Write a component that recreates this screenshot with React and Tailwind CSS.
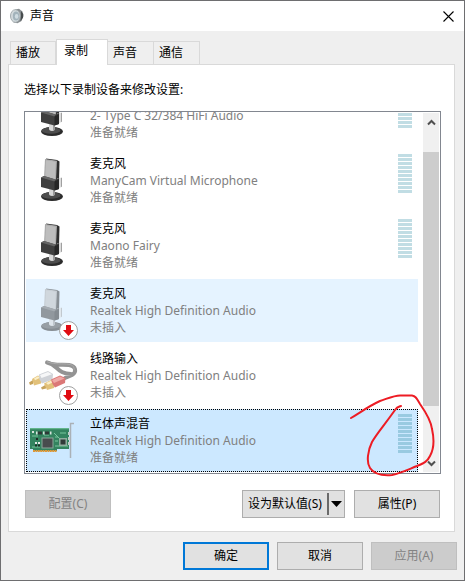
import { useState } from 'react';
import clsx from 'clsx';

const tabs = ['播放', '录制', '声音', '通信'];

const devices = [
  { id: 1, driver: '2- Type C 32/384 HiFi Audio', status: '准备就绪', icon: 'mic', meter: true },
  { id: 2, name: '麦克风', driver: 'ManyCam Virtual Microphone', status: '准备就绪', icon: 'mic', meter: true },
  { id: 3, name: '麦克风', driver: 'Maono Fairy', status: '准备就绪', icon: 'mic', meter: true },
  { id: 4, name: '麦克风', driver: 'Realtek High Definition Audio', status: '未插入', icon: 'mic', unplugged: true, hot: true },
  { id: 5, name: '线路输入', driver: 'Realtek High Definition Audio', status: '未插入', icon: 'line', unplugged: true },
  { id: 6, name: '立体声混音', driver: 'Realtek High Definition Audio', status: '准备就绪', icon: 'card', meter: true },
];

function SpeakerIcon() {
  return (
    <svg width="16" height="16" viewBox="0 0 16 16" aria-hidden="true">
      <path d="M6 1.500 10 .8l3.500 2.700L14.500 8l-2 5-4 2.200-4-.7z" fill="#8b9194" />
      <path d="M12 3 14.300 6l-.3 3.500-2.500 4z" fill="#474c4e" />
      <ellipse cx="6.300" cy="8" rx="4.800" ry="6.300" fill="#d3dadd" stroke="#a5adb0" />
      <ellipse cx="7" cy="8" rx="3.200" ry="4.500" fill="#a3b3bb" />
      <ellipse cx="7.600" cy="8.400" rx="1.800" ry="2.400" fill="#cfdbe1" />
    </svg>
  );
}

function MicShape() {
  return (
    <g>
      <ellipse cx="26" cy="47.500" rx="11" ry="4.500" fill="#2b2b2b" />
      <ellipse cx="25" cy="46.500" rx="9.500" ry="3.300" fill="#4d4d4d" />
      <path d="M23 39h6v6c0 2.500-6 2.500-6 0z" fill="#d8d8d8" />
      <path d="M27 39h2v7h-2z" fill="#9b9b9b" />
      <path d="M20 9.500 31 11l2.500 1.500-.5 19.500-4-1z" fill="#2e2e2e" />
      <path d="M19 10 31 11.800 30 31 18 29z" fill="#a9a9a9" />
      <path d="M20 11.200 29.800 12.700 29 30 19.200 28z" fill="#bdbdbd" />
      <path d="M31 29.500 36 28.500v9L32 40z" fill="#dcdcdc" />
      <path d="M35 29 36 28.800v8.700l-1 .7z" fill="#a0a0a0" />
      <path d="M15 28.500 18 27l11.500 3.500L33 29v11l-4.500 1.500L15 38z" fill="#3f3f3f" />
      <path d="M15 28.500 18 27l11.500 3.500-1 2z" fill="#666" />
      <path d="M28.500 32.500 33 30v10l-4.500 1.500z" fill="#262626" />
    </g>
  );
}

function LineInShape() {
  return (
    <g>
      <path
        d="M21 18.500C29 20 30 25 36 28c3 1.500 6 2 9 2M21 18.500C30 22 36 20 43 21 50 22 51 28 46 31L39 34"
        fill="none"
        stroke="#6f6f6f"
        strokeWidth="4"
        strokeLinecap="round"
      />
      <path d="M21 17.800C30 21 36 19.300 43 20.300c4 .6 5.500 3 5 6" fill="none" stroke="#929292" strokeWidth="1" />
      <path d="M3 38.500 7 36v4l-3 1z" fill="#b58526" />
      <path d="M6 35 12 31.500l4 3-1 5-7 2z" fill="#d9ad4e" />
      <path d="M8 34.500 12 32.300l2 1.500-5 2.500z" fill="#fae9b5" />
      <path d="M13 30.500 22 27l5 3-.5 5.500L16 39.500l-2.500-4z" fill="#bfc3ca" />
      <path d="M14 31 22 28l4 2.200L15.500 34z" fill="#f4f5f6" />
      <path d="M15 43.500 20 40.500v4l-4 1z" fill="#b58526" />
      <path d="M18 39.500 25 36l4 3-1 5-7 2z" fill="#d9ad4e" />
      <path d="M20 39 25 36.800l2 1.500-5 2.500z" fill="#fae9b5" />
      <path d="M25 35.500 34 31.500l5.500 2.500-.5 5L29 43.500 26.500 40z" fill="#d04c4a" />
      <path d="M26 36 34 32.500l4.500 2L28 39z" fill="#ea8d89" />
    </g>
  );
}

function SoundCardShape() {
  return (
    <g>
      <path d="M44.500 49V14.500H48" fill="none" stroke="#aab1b7" strokeWidth="1.500" />
      <path d="M4 19h39v21H31v2H7v-2H4z" fill="#33835f" />
      <path d="M4 19h39v1.200H4z" fill="#62b58d" />
      <path d="M7 42h24" stroke="#dd983a" strokeWidth="2" strokeDasharray="2 .4" />
      <path d="M6 27h6M6 38h8M28 24l5 5M29 32h3M29 37h13M29 28h3M34 24h6M18 26h5" stroke="#78c79e" strokeWidth="1" />
      <path d="M15.500 28.500h12v11h-12z" fill="#8ba79b" />
      <path d="M16.500 29.500h10v9h-10z" fill="#484c4e" />
      <path d="M33 29h8v8h-8z" fill="#8fae9f" />
      <path d="M34.500 30.500h5v5h-5z" fill="#303a38" />
      <path d="M12 22.500h4v3h-4zM19 22.500h4v3h-4z" fill="#2c3936" />
      <path d="M10 22.500h1.500v3H10zM17 22.500h1.500v3H17zM24 22.500h1.500v3H24zM6 22h2v2H6z" fill="#d6e2db" />
      <path d="M9 33h2v2H9zM12 33h2v2h-2z" fill="#e1e8e4" />
      <path d="M9 35.500h2v2H9zM12 35.500h2v2h-2zM10 29h2v2h-2z" fill="#1e2d28" />
      <path d="M42 23h2v3h-2zM42 28h2v3h-2zM42 33h2v3h-2z" fill="#c2ccc8" />
    </g>
  );
}

function DeviceIcon({ icon, unplugged }) {
  return (
    <svg width="64" height="63" viewBox="0 0 64 63" className="shrink-0" aria-hidden="true">
      <g opacity={unplugged ? (icon === 'mic' ? 0.5 : 0.75) : 1}>
        {icon === 'mic' && <MicShape />}
        {icon === 'line' && <LineInShape />}
        {icon === 'card' && <SoundCardShape />}
      </g>
      {unplugged && (
        <g>
          <circle cx="42.500" cy="51.500" r="9" fill="#fff" stroke="#a0a0a0" />
          <path d="M40 46h5v5h3l-5.500 6-5.500-6h3z" fill="#e00b12" />
        </g>
      )}
    </svg>
  );
}

function Meter({ selected }) {
  return (
    <div className="flex flex-col gap-px pt-[5px] pr-1.5">
      {Array.from({ length: 10 }, (_, i) => (
        <div key={i} className={clsx('h-[3px] w-3.5', selected ? 'bg-[#99cae1]' : 'bg-[#c1dde4]')} />
      ))}
    </div>
  );
}

function Button({ className, children, ...props }) {
  return (
    <button
      type="button"
      className={clsx(
        'flex h-7 w-[86px] items-center justify-center border disabled:border-[#bfbfbf] disabled:bg-[#cccccc] disabled:text-[#838383]',
        className || 'border-[#adadad] bg-[#e1e1e1]'
      )}
      {...props}
    >
      {children}
    </button>
  );
}

export default function App() {
  const [tab, setTab] = useState('录制');
  const [selected, setSelected] = useState(6);

  return (
    <div className="border border-[#6e6e70] bg-[#efefef] font-['Noto_Sans','Noto_Sans_CJK_SC',sans-serif] text-xs text-black">
      <header className="flex h-[30px] items-center bg-white pr-2.5 pl-2">
        <SpeakerIcon />
        <h1 className="ml-[5px] grow">声音</h1>
        <button type="button" aria-label="关闭">
          <svg width="11" height="11" viewBox="0 0 11 11">
            <path d="M.5.5l10 10M10.500.5l-10 10" stroke="#000" strokeWidth="1.100" />
          </svg>
        </button>
      </header>

      <main className="px-[7px] pt-2 pb-2.5">
        <div role="tablist" className="flex items-end px-0.5">
          {tabs.map((t) => (
            <button
              key={t}
              type="button"
              role="tab"
              aria-selected={t === tab}
              onClick={() => setTab(t)}
              className={clsx(
                'border border-b-0 border-[#d9d9d9] text-left',
                t === tab
                  ? 'relative -mb-px h-[26px] w-[52px] bg-white pb-1 pl-[7px]'
                  : 'h-[23px] w-[46px] border-l-0 pl-[5px] first:border-l'
              )}
            >
              {t}
            </button>
          ))}
        </div>

        <section role="tabpanel" className="mr-0.5 border border-[#d9d9d9] bg-white pt-4 pr-[13px] pb-[13px] pl-[15px]">
          <p id="hint" className="leading-[18px]">选择以下录制设备来修改设置:</p>

          <div className="relative mt-3 flex h-[363px] border border-[#828790] pl-px">
            <ul role="listbox" aria-labelledby="hint" className="flex grow flex-col justify-end gap-0.5 overflow-hidden pb-px">
              {devices.map((d) => (
                <li
                  key={d.id}
                  role="option"
                  aria-selected={d.id === selected}
                  onClick={() => setSelected(d.id)}
                  className={clsx(
                    'relative flex h-[63px] shrink-0',
                    d.id === selected ? 'bg-[#cce8ff]' : d.hot && 'bg-[#e5f3ff]'
                  )}
                >
                  <DeviceIcon icon={d.icon} unplugged={d.unplugged} />
                  <div className="flex grow flex-col justify-end pb-1.5 leading-[17px] text-[#808080]">
                    {d.name && <div className="text-black">{d.name}</div>}
                    <div>{d.driver}</div>
                    <div>{d.status}</div>
                  </div>
                  {d.meter && <Meter selected={d.id === selected} />}
                  {d.id === selected && <div className="absolute inset-0 border border-dotted border-black" />}
                </li>
              ))}
            </ul>

            <div className="mt-px mr-px mb-px ml-[5px] flex w-4 flex-col items-center bg-[#f0f0f0]">
              <svg width="9" height="39" viewBox="0 0 9 39">
                <path d="M1 11.500 4.500 8 8 11.500" fill="none" stroke="#505050" strokeWidth="2" />
              </svg>
              <div className="w-full grow bg-[#cdcdcd]" />
              <svg width="9" height="66" viewBox="0 0 9 66">
                <path d="M1 55.500 4.500 59 8 55.500" fill="none" stroke="#505050" strokeWidth="2" />
              </svg>
            </div>

            {/* hand-drawn circle around the level meter */}
            <svg width="90" height="86" viewBox="0 0 90 86" className="pointer-events-none absolute right-0 -bottom-1.5" aria-hidden="true">
              <path
                d="M1 25C11 19 19 13 30 8 39 5 45 2 51 2.500H62C66 3 67 6 70 11 77 21 81 28 82 36 84 45 84 56 80 63 77 69 74 70 67 73 57 77 51 80 42 82 31 83 24 81 20 75 16 69 18 57 22 49 27 40 33 34 45 17 47 14 48 14 51 13"
                fill="none"
                stroke="#ed1c24"
                strokeWidth="2"
                strokeLinecap="round"
                strokeLinejoin="round"
              />
            </svg>
          </div>

          <div className="mt-4 flex gap-[9px] px-px">
            <Button disabled>配置(C)</Button>
            <div className="ml-auto flex h-7 w-[103px] items-center border border-[#adadad] bg-[#e1e1e1]">
              <button type="button" className="grow">设为默认值(S)</button>
              <button type="button" aria-label="更多选项" className="flex h-[22px] items-center border-l-2 border-[#6a6a6a] px-0.5">
                <svg width="11" height="6" viewBox="0 0 11 6">
                  <path d="M0 0h11L5.500 6z" />
                </svg>
              </button>
            </div>
            <Button>属性(P)</Button>
          </div>
        </section>

        <footer className="mt-2.5 flex justify-end gap-2">
          <Button className="border-2 border-[#0078d7] bg-[#e1e1e1]">确定</Button>
          <Button>取消</Button>
          <Button disabled>应用(A)</Button>
        </footer>
      </main>
    </div>
  );
}
